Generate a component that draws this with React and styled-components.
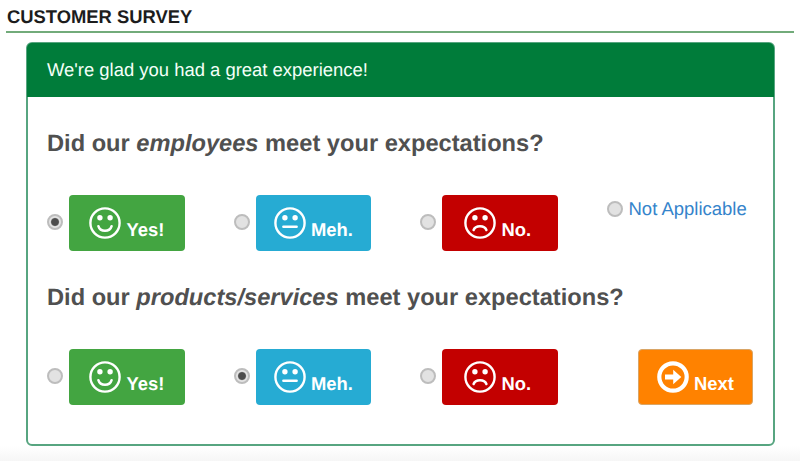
import React, { useState } from "react";
// Style
import styled, { createGlobalStyle } from "styled-components";

const answers = [
  { value: "yes", label: "Yes!", color: "#43a541", indent: 20 },
  { value: "meh", label: "Meh.", color: "#26abd3", indent: 18 },
  { value: "no", label: "No.", color: "#c30000", indent: 22 },
];

const mouths = {
  yes: "M-6.6 3.2C-4.8 9.4 4.8 9.4 6.6 3.2",
  meh: "M-6.6 3.8H6.6",
  no: "M-6.4 7C-4.6 2 4.6 2 6.4 7",
};

const Face = ({ mood }) => (
  <Icon viewBox="-16 -16 32 32">
    <circle r="14.6" fill="none" stroke="#fff" strokeWidth="2.4" />
    <circle cx="-5.1" cy="-5.3" r="2.7" fill="#fff" />
    <circle cx="5.1" cy="-5.3" r="2.7" fill="#fff" />
    <path
      d={mouths[mood]}
      fill="none"
      stroke="#fff"
      strokeWidth="2.5"
      strokeLinecap="round"
    />
  </Icon>
);

const ArrowCircle = () => (
  <Icon viewBox="-16 -16 32 32">
    <circle r="13.7" fill="none" stroke="#fff" strokeWidth="4.2" />
    <path d="M-8 -2.5H0.2V-7.2L8.3 0L0.2 7.2V2.5H-8Z" fill="#fff" />
  </Icon>
);

const Question = ({ name, subject, initial, children }) => {
  const [answer, setAnswer] = useState(initial);

  return (
    <QuestionStyle>
      <Heading>
        Did our <em>{subject}</em> meet your expectations?
      </Heading>
      <Row>
        {answers.map(({ value, label, color, indent }) => (
          <Option key={value}>
            <Radio
              name={name}
              checked={answer === value}
              onChange={() => setAnswer(value)}
            />
            <Tile $color={color} $indent={indent}>
              <Face mood={value} />
              <TileText>{label}</TileText>
            </Tile>
          </Option>
        ))}
        {children && children({ answer, setAnswer })}
      </Row>
    </QuestionStyle>
  );
};

const App = () => {
  return (
    <>
      <GlobalStyle />
      <Page>
        <Title>CUSTOMER SURVEY</Title>
        <Card>
          <CardHeader>We're glad you had a great experience!</CardHeader>
          <CardBody>
            <Question name="employees" subject="employees" initial="yes">
              {({ answer, setAnswer }) => (
                <NotApplicable>
                  <Radio
                    name="employees"
                    checked={answer === "na"}
                    onChange={() => setAnswer("na")}
                  />
                  Not Applicable
                </NotApplicable>
              )}
            </Question>
            <Question name="products" subject="products/services" initial="meh">
              {() => (
                <NextButton type="button">
                  <ArrowCircle />
                  <TileText>Next</TileText>
                </NextButton>
              )}
            </Question>
          </CardBody>
        </Card>
      </Page>
    </>
  );
};

export default App;

const GlobalStyle = createGlobalStyle`
  * {
    box-sizing: border-box;
  }
  body {
    margin: 0;
    background-color: #fff;
    font-family: "Liberation Sans", Arial, sans-serif;
    text-rendering: geometricPrecision;
  }
`;

const Page = styled.main`
  width: 800px;
  height: 461px;
  padding: 0 6px;
  overflow: hidden;
  background: linear-gradient(#fff 446px, #f6f6f6 461px);
`;

const Title = styled.h1`
  height: 33px;
  margin: 0;
  padding: 6px 0 0 1px;
  border-bottom: 2px solid #72ab7a;
  color: #1c1c1c;
  font-size: 18.4px;
  line-height: 22px;
`;

const Card = styled.section`
  height: 404px;
  margin: 9px 19px 0 20px;
  border: 2px solid #57a580;
  border-radius: 6px;
  background-color: #fff;
`;

const CardHeader = styled.header`
  height: 54px;
  margin: -1px -1px 0;
  padding-left: 20px;
  border-radius: 5px 5px 0 0;
  background-color: #007c3a;
  color: #f4fff8;
  font-size: 18.45px;
  line-height: 54px;
`;

const CardBody = styled.div`
  padding: 0 19px;
`;

const QuestionStyle = styled.div`
  height: 154px;
  padding-top: 33px;
`;

const Heading = styled.h2`
  margin: 0 0 37px;
  color: #505050;
  font-size: 23.65px;
  line-height: 28px;
`;

const Row = styled.div`
  display: grid;
  grid-template-columns: repeat(3, 186.5px) 1fr;
`;

const Option = styled.label`
  display: flex;
  align-items: center;
  gap: 6px;
`;

const Radio = styled.input.attrs({ type: "radio" })`
  appearance: none;
  flex: none;
  width: 16px;
  height: 16px;
  margin: 0 0 3px;
  border: 2px solid #bdbdbd;
  border-radius: 50%;
  background: #e2e2e2;

  &:checked {
    background: radial-gradient(circle, #4c4c4c 3.4px, #e4e4e4 4.6px);
  }
`;

const Tile = styled.span`
  display: flex;
  width: 115.5px;
  height: 56px;
  padding-left: ${({ $indent }) => $indent}px;
  align-items: center;
  gap: 5.5px;
  border-radius: 4px;
  background-color: ${({ $color }) => $color};
  color: #fff;
`;

const Icon = styled.svg`
  flex: none;
  width: 32px;
  height: 32px;
  margin-bottom: 1px;
`;

const TileText = styled.span`
  padding-top: 13px;
  font-size: 18.4px;
  font-weight: bold;
  line-height: 22px;
`;

const NextButton = styled.button`
  display: flex;
  width: 115px;
  height: 56px;
  margin-right: 1px;
  padding: 0 0 0 18px;
  align-items: center;
  justify-self: end;
  gap: 5px;
  border: 1px solid #d9a566;
  border-radius: 4px;
  background-color: #ff8200;
  color: #fff;
  font-family: inherit;
`;

const NotApplicable = styled.label`
  display: flex;
  height: 27px;
  align-items: center;
  gap: 6px;
  color: #3584cb;
  font-size: 18.5px;
  white-space: nowrap;

  input {
    margin: 0;
  }
`;
